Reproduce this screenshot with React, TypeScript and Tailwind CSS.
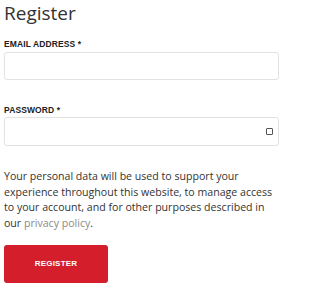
export default function App() {
  return (
    <div className="w-[288px] h-[288px] bg-white overflow-hidden px-[4px] pr-[9px]" style={{ fontFamily: '"Open Sans", "Noto Sans", sans-serif' }}>
      <h2 className="pt-[1px] text-[19px] leading-[24px] text-[#333] font-normal m-0">Register</h2>
      <div className="mt-[14px] text-[8.5px] leading-[10px] font-bold text-[#222] tracking-[0.1px]" style={{ fontFamily: '"Liberation Sans", Arial, sans-serif' }}>EMAIL ADDRESS *</div>
      <div className="mt-[3px] h-[28px] border border-[#e2e2e2] rounded-[3px]"></div>
      <div className="mt-[25px] text-[8.5px] leading-[10px] font-bold text-[#222] tracking-[0.1px]" style={{ fontFamily: '"Liberation Sans", Arial, sans-serif' }}>PASSWORD *</div>
      <div className="mt-[2px] h-[29px] border border-[#e2e2e2] rounded-[3px] flex items-center justify-end pr-[5px]">
        <div className="w-[7px] h-[7px] border border-[#555] rounded-[1px]"></div>
      </div>
      <p className="mt-[23px] text-[10.6px] leading-[15.5px] text-[#333]">
        Your personal data will be used to support your experience throughout this website, to manage access to your account, and for other purposes described in our <span className="text-[#8a8a8a]">privacy policy</span>.
      </p>
      <button className="mt-[14px] w-[104px] h-[38px] bg-[#d41e2c] rounded-[3px] text-white text-[8px] font-bold tracking-[0.2px]" style={{ fontFamily: '"Liberation Sans", Arial, sans-serif' }}>REGISTER</button>
    </div>
  );
}
